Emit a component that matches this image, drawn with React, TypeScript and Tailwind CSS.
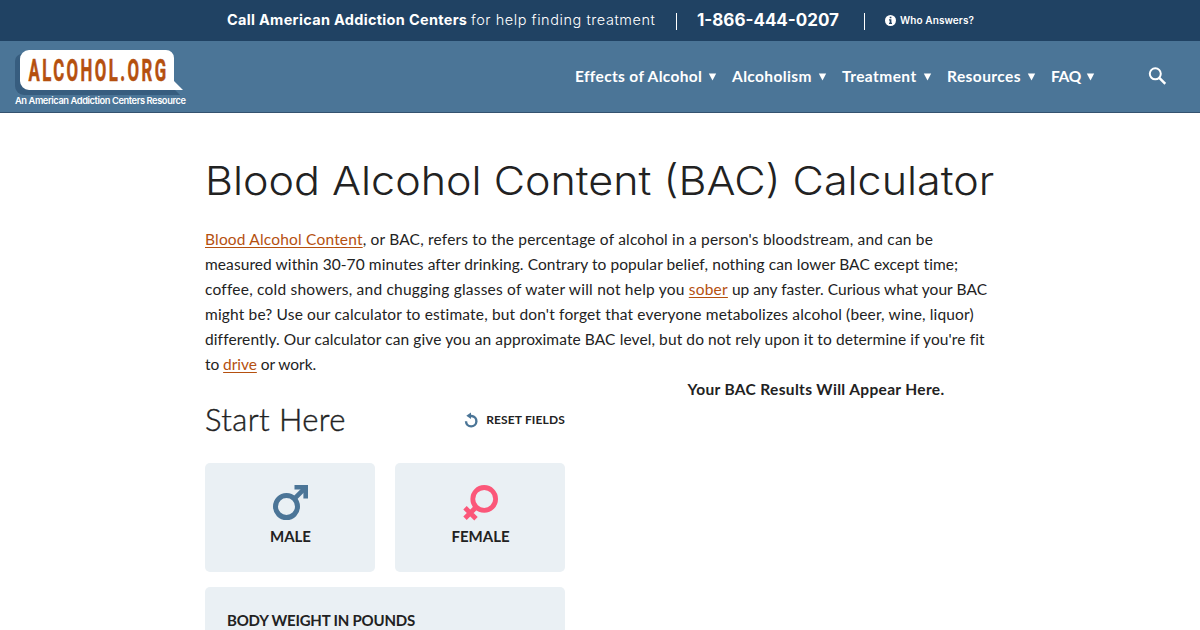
import type { ReactNode } from "react"

const navItems = [
  { label: "Effects of Alcohol", width: "w-[127px] tracking-[.34px]" },
  { label: "Alcoholism", width: "w-[80px] tracking-[.38px]" },
  { label: "Treatment", width: "w-[75px] tracking-[.43px]" },
  { label: "Resources", width: "w-[74px] tracking-[.43px]" },
  { label: "FAQ", width: "w-[29px] tracking-[-.3px]" },
]

function Logo() {
  return (
    <a href="#" className="block">
      <svg width="190" height="66" viewBox="0 0 190 66" aria-label="Alcohol.org">
        <path d="M23 13h-1a7 7 0 0 0-7 7v25a9 9 0 0 0 9 9h156l-8-8z" fill="#375d7f" />
        <path d="M29 9h137a8 8 0 0 1 8 8v23l9 9H29a9 9 0 0 1-9-9V18a9 9 0 0 1 9-9z" fill="#fff" />
        <text
          transform="translate(28.5 40) scale(.54 1)"
          textLength="255"
          fontSize="31"
          fontWeight="700"
          fill="#b5500f"
          stroke="#b5500f"
          strokeWidth=".6"
          strokeLinejoin="round"
          className="font-['Roboto',sans-serif]"
        >
          ALCOHOL.ORG
        </text>
        <text x="15" y="62.5" textLength="171" fontSize="9.3" fontWeight="600" fill="#fff" className="font-['Inter',sans-serif]">
          An American Addiction Centers Resource
        </text>
      </svg>
    </a>
  )
}

function TopBar() {
  return (
    <div className="flex h-[41px] items-center bg-[#204263] pl-[227px] text-white whitespace-nowrap font-['Inter',sans-serif]">
      <p className="-mt-px flex w-[449px] text-[14.5px]">
        <span className="w-[244px] font-bold tracking-[.31px]">Call American Addiction Centers</span>
        <span className="font-light tracking-[.55px]">for help finding treatment</span>
      </p>
      <span className="mt-px h-[17px] w-px bg-white" />
      <a href="#" className="ml-5 w-[167px] text-[17px] font-bold">1-866-444-0207</a>
      <span className="mt-px h-[17px] w-px bg-white" />
      <a href="#" className="ml-5 flex items-center gap-1 text-[10px] font-semibold tracking-[.1px]">
        <svg width="11" height="11" viewBox="0 0 11 11">
          <circle cx="5.5" cy="5.5" r="5.5" fill="#fff" />
          <path d="M4.7 1.8h1.7v1.5H4.7zM4 4.3h2.4v3.4H7v1.2H4V7.7h.7V5.4H4z" fill="#204263" />
        </svg>
        Who Answers?
      </a>
    </div>
  )
}

function Header() {
  return (
    <header className="flex h-[72px] justify-between border-b border-[#34526f] bg-[#4b7597]">
      <Logo />
      <div className="flex items-center pr-[34px]">
        <nav className="flex gap-[15px] text-[15.5px] font-bold text-white whitespace-nowrap font-['Lato',sans-serif]">
          {navItems.map((item) => (
            <a href="#" key={item.label} className="flex items-center">
              <span className={item.width}>{item.label}</span>
              <svg className="ml-[6px]" width="9" height="8" viewBox="0 0 9 8">
                <path d="M.8.5h7.4L4.5 7.5z" fill="#fff" />
              </svg>
            </a>
          ))}
        </nav>
        <svg className="ml-[53px] -mt-[2px]" width="18" height="18" viewBox="0 0 18 18" fill="none" stroke="#fff">
          <circle cx="7.3" cy="6.8" r="5.5" strokeWidth="2" />
          <path d="M11.3 10.8l6 6" strokeWidth="2.4" />
        </svg>
      </div>
    </header>
  )
}

function TextLink({ children }: { children: ReactNode }) {
  return <a href="#" className="text-[#b5500f] underline underline-offset-2">{children}</a>
}

function Intro() {
  return (
    <div className="mt-[22px] text-[15.5px] leading-[25px] whitespace-nowrap">
      <p className="tracking-[.185px]"><TextLink>Blood Alcohol Content</TextLink>, or BAC, refers to the percentage of alcohol in a person's bloodstream, and can be</p>
      <p className="tracking-[.085px]">measured within 30-70 minutes after drinking. Contrary to popular belief, nothing can lower BAC except time;</p>
      <p className="tracking-[.04px]">
        <span className="tracking-[.22px]">coffee, cold showers, and chugging glasses of water will not help you <TextLink>sober</TextLink></span> up any faster. Curious what your BAC
      </p>
      <p className="tracking-[.16px]">might be? Use our calculator to estimate, but don't forget that everyone metabolizes alcohol (beer, wine, liquor)</p>
      <p className="tracking-[.1px]">differently. Our calculator can give you an approximate BAC level, but do not rely upon it to determine if you're fit</p>
      <p className="tracking-[-.06px]">to <TextLink>drive</TextLink> or work.</p>
    </div>
  )
}

function GenderButton({ label, children }: { label: string; children: ReactNode }) {
  return (
    <button className="flex h-[109px] w-[170px] flex-col items-center rounded-[5px] bg-[#eaf0f4] pt-[22px]">
      {children}
      <span className="mt-[5px] pl-px text-[15px] leading-5 font-bold">{label}</span>
    </button>
  )
}

function Calculator() {
  return (
    <form className="w-[360px]">
      <div className="flex h-[86px] items-center justify-between">
        <h2 className="-mt-px text-[31px] font-light tracking-[.4px] [-webkit-text-stroke:.4px]">Start Here</h2>
        <button type="button" className="flex items-center text-[12px] font-bold tracking-[.15px]">
          <svg className="mr-[7px]" width="15" height="16" viewBox="0 0 14 16" fill="none">
            <path d="M5 4h2.2a5.2 5.2 0 1 1-5.7 5.3" stroke="#4b7597" strokeWidth="2.4" />
            <path d="M1.8 3.8L6.5.4v6.7z" fill="#4b7597" />
          </svg>
          RESET FIELDS
        </button>
      </div>
      <div className="flex gap-5">
        <GenderButton label="MALE">
          <svg width="35" height="36" viewBox="0 0 35 36" fill="none" stroke="#4b7597">
            <circle cx="13.5" cy="21.6" r="11" strokeWidth="5" />
            <path d="M21 14.1L32 3.1" strokeWidth="4.8" />
            <path d="M21.5 0H35v13.5h-4.6V7.5l-2.7-2.9h-6.2z" fill="#4b7597" stroke="none" />
          </svg>
        </GenderButton>
        <GenderButton label="FEMALE">
          <svg width="35" height="36" viewBox="0 0 35 36" fill="none" stroke="#fb5779">
            <circle cx="21.2" cy="13.9" r="11.4" strokeWidth="4.8" />
            <path d="M13.5 21.7L2 33.2M2 22.7l11 11" strokeWidth="4.8" />
          </svg>
        </GenderButton>
      </div>
      <div className="mt-[15px] h-[43px] rounded-t-[5px] bg-[#eaf0f4] px-[22px] pt-[23px]">
        <label className="block text-[15px] leading-5 font-bold tracking-[-.2px]">BODY WEIGHT IN POUNDS</label>
      </div>
    </form>
  )
}

function App() {
  return (
    <div className="h-[630px] overflow-hidden bg-white text-[#222]">
      <TopBar />
      <Header />
      <main className="mx-auto w-[790px] pt-[44px] font-['Lato',sans-serif]">
        <h1 className="origin-left scale-x-[1.076] text-[40px] leading-[48px] font-light whitespace-nowrap font-['Inter',sans-serif]">
          Blood Alcohol Content (BAC) Calculator
        </h1>
        <Intro />
        <div className="flex justify-between whitespace-nowrap">
          <Calculator />
          <p className="w-[358px] text-center text-[15.5px] leading-[25px] font-bold tracking-[.34px]">Your BAC Results Will Appear Here.</p>
        </div>
      </main>
    </div>
  )
}

export default App
